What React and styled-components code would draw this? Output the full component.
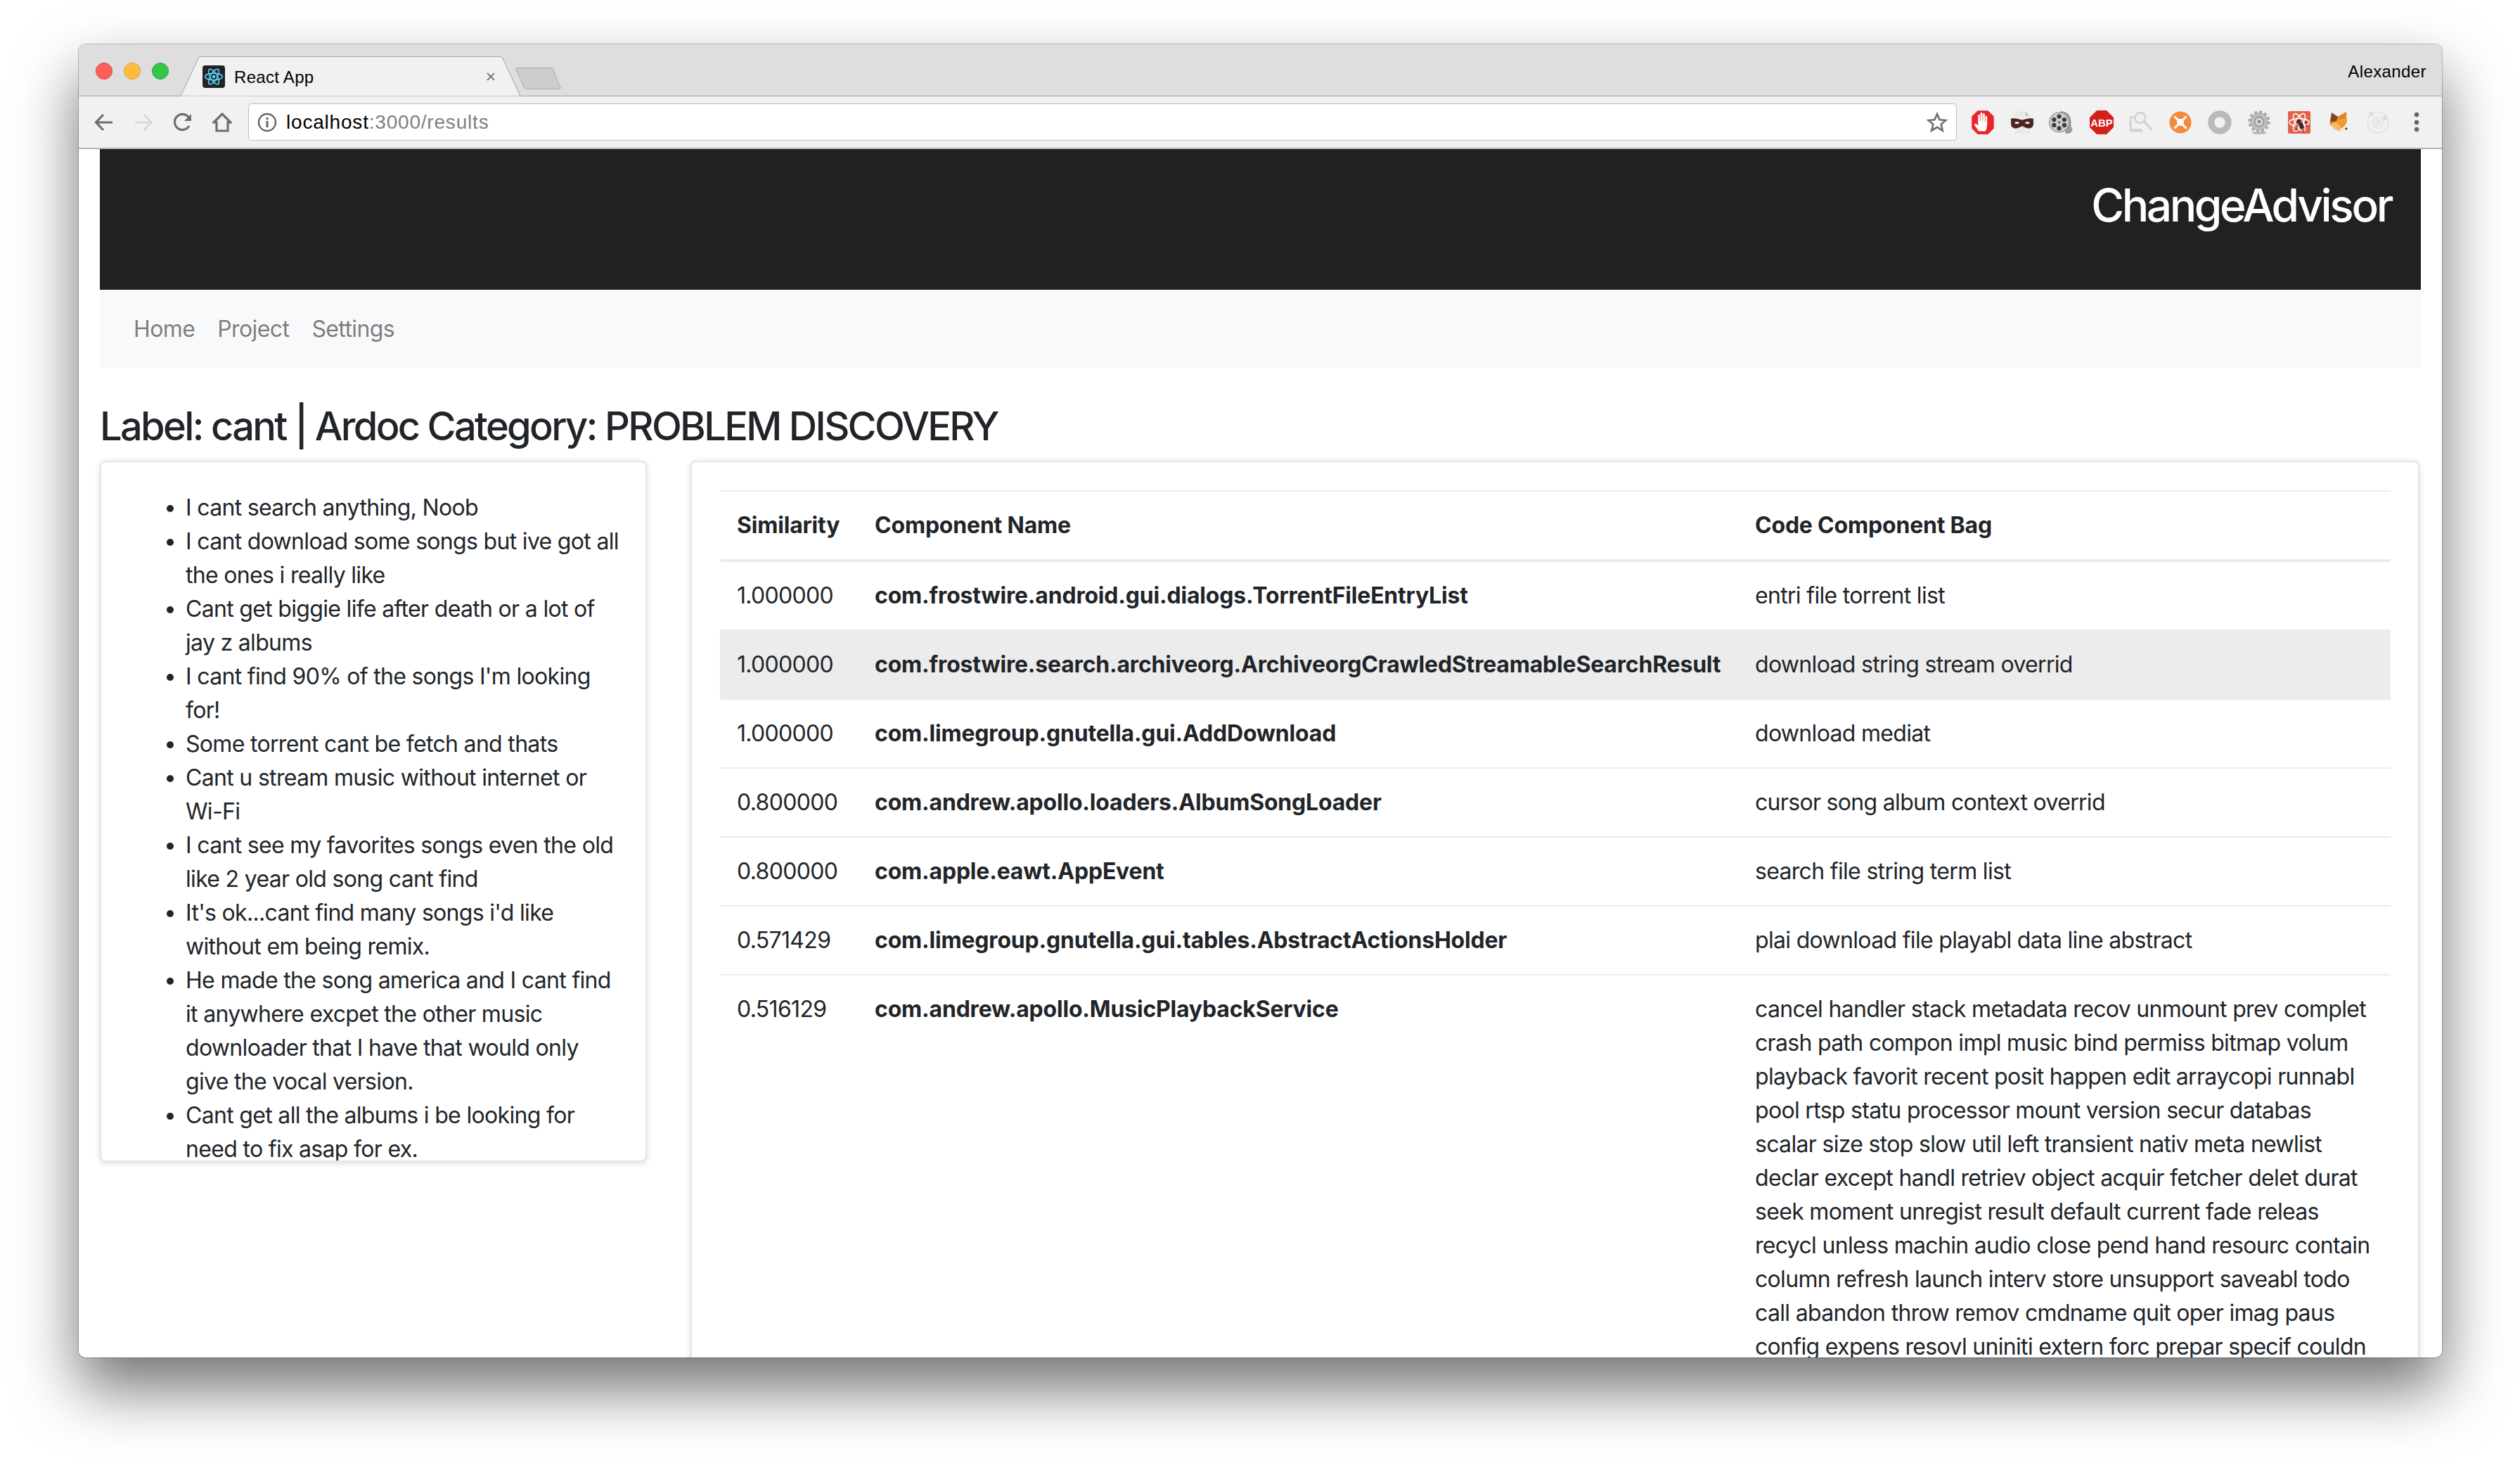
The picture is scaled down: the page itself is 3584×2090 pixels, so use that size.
import styled, { createGlobalStyle } from 'styled-components';

const GlobalStyle = createGlobalStyle`
  html, body {
    margin: 0;
    background: #ffffff;
    overflow: hidden;
  }
  * {
    box-sizing: border-box;
  }
`;

const uiFont = `Inter, 'Liberation Sans', sans-serif`;
const chromeFont = `'Liberation Sans', Arial, sans-serif`;

const reviews = [
  ['I cant search anything, Noob'],
  ['I cant download some songs but ive got all', 'the ones i really like'],
  ['Cant get biggie life after death or a lot of', 'jay z albums'],
  ["I cant find 90% of the songs I'm looking", 'for!'],
  ['Some torrent cant be fetch and thats'],
  ['Cant u stream music without internet or', 'Wi-Fi'],
  ['I cant see my favorites songs even the old', 'like 2 year old song cant find'],
  ["It's ok...cant find many songs i'd like", 'without em being remix.'],
  ['He made the song america and I cant find', 'it anywhere excpet the other music', 'downloader that I have that would only', 'give the vocal version.'],
  ['Cant get all the albums i be looking for', 'need to fix asap for ex.'],
];

const results = [
  { id: 1, score: '1.000000', name: 'com.frostwire.android.gui.dialogs.TorrentFileEntryList', bag: ['entri file torrent list'] },
  { id: 2, score: '1.000000', name: 'com.frostwire.search.archiveorg.ArchiveorgCrawledStreamableSearchResult', bag: ['download string stream overrid'], active: true },
  { id: 3, score: '1.000000', name: 'com.limegroup.gnutella.gui.AddDownload', bag: ['download mediat'] },
  { id: 4, score: '0.800000', name: 'com.andrew.apollo.loaders.AlbumSongLoader', bag: ['cursor song album context overrid'] },
  { id: 5, score: '0.800000', name: 'com.apple.eawt.AppEvent', bag: ['search file string term list'] },
  { id: 6, score: '0.571429', name: 'com.limegroup.gnutella.gui.tables.AbstractActionsHolder', bag: ['plai download file playabl data line abstract'] },
  {
    id: 7,
    score: '0.516129',
    name: 'com.andrew.apollo.MusicPlaybackService',
    bag: [
      'cancel handler stack metadata recov unmount prev complet',
      'crash path compon impl music bind permiss bitmap volum',
      'playback favorit recent posit happen edit arraycopi runnabl',
      'pool rtsp statu processor mount version secur databas',
      'scalar size stop slow util left transient nativ meta newlist',
      'declar except handl retriev object acquir fetcher delet durat',
      'seek moment unregist result default current fade releas',
      'recycl unless machin audio close pend hand resourc contain',
      'column refresh launch interv store unsupport saveabl todo',
      'call abandon throw remov cmdname quit oper imag paus',
      'config expens resovl uniniti extern forc prepar specif couldn',
    ],
  },
];

const Atom = ({ size = 32, color = '#61dafb', strokeWidth = 1.6 }) => (
  <svg width={size} height={size} viewBox="0 0 32 32" fill="none" stroke={color} strokeWidth={strokeWidth}>
    <ellipse cx="16" cy="16" rx="13" ry="5.2" />
    <ellipse cx="16" cy="16" rx="13" ry="5.2" transform="rotate(60 16 16)" />
    <ellipse cx="16" cy="16" rx="13" ry="5.2" transform="rotate(120 16 16)" />
    <circle cx="16" cy="16" r="2.4" fill={color} stroke="none" />
  </svg>
);

const StopHand = () => (
  <svg width="36" height="36" viewBox="0 0 32 32">
    <path d="M9.5 1h13L30 8.500v15L22.500 31h-13L2 23.500v-15z" fill="#e8262b" />
    <path d="M10.500 27c-1-3-4.500-6-5-8-.3-1.300 1.300-2 2.300-1l2.200 2.200V7.500c0-1.700 2.300-1.700 2.400 0V14h.6V5c0-1.800 2.500-1.800 2.600 0v9h.6V6c0-1.700 2.400-1.700 2.400 0v9h.6V9c0-1.600 2.300-1.600 2.300 0v9c0 4-1 7-2 9z" fill="#ffffff" />
  </svg>
);

const MaskDoc = () => (
  <svg width="34" height="34" viewBox="0 0 32 32">
    <path d="M6 1h14l6 6v24H6z" fill="#e9ebe6" />
    <path d="M20 1v6h6z" fill="#c9cbc6" />
    <path d="M1 11c5-1 9 0 15 2 6-2 10-3 15-2v7c0 4-3 6-7 6-3 0-5-2-8-3-3 1-5 3-8 3-4 0-7-2-7-6z" fill="#4b2423" />
    <ellipse cx="9" cy="16.500" rx="3" ry="1.500" fill="#f1ece8" />
    <ellipse cx="23" cy="16.500" rx="3" ry="1.500" fill="#f1ece8" />
  </svg>
);

const FilmReel = () => (
  <svg width="36" height="36" viewBox="0 0 32 32">
    <path d="M14 2c6 0 14 2 14 14 0 3 0 7 2 9-1 4-5 6-9 5z" fill="#9c9c9c" />
    <circle cx="13" cy="16" r="12.500" fill="#cfcfcf" stroke="#8c8c8c" />
    <circle cx="13" cy="8.500" r="2.800" fill="#3d3d3d" />
    <circle cx="13" cy="23.500" r="2.800" fill="#3d3d3d" />
    <circle cx="6.500" cy="12.500" r="2.800" fill="#3d3d3d" />
    <circle cx="19.500" cy="12.500" r="2.800" fill="#3d3d3d" />
    <circle cx="6.500" cy="19.500" r="2.800" fill="#3d3d3d" />
    <circle cx="19.500" cy="19.500" r="2.800" fill="#3d3d3d" />
    <circle cx="13" cy="16" r="1.600" fill="#666666" />
  </svg>
);

const AbpBadge = () => (
  <svg width="34" height="34" viewBox="0 0 32 32">
    <path d="M9.500 0h13L32 9.500v13L22.500 32h-13L0 22.500v-13z" fill="#d4201a" />
    <text x="16" y="21.500" textAnchor="middle" fontFamily={chromeFont} fontWeight="700" fontSize="14" fill="#ffffff">ABP</text>
  </svg>
);

const GhostSearch = () => (
  <svg width="34" height="34" viewBox="0 0 32 32" fill="none" stroke="#d2d2d2" strokeWidth="2.600">
    <path d="M9 9H2v17h15" />
    <path d="M2 26h16v3H2z" fill="#d2d2d2" stroke="none" />
    <circle cx="15" cy="10" r="7" />
    <path d="M20 15l10 10" strokeWidth="3" strokeLinecap="round" />
  </svg>
);

const OrangeHub = () => (
  <svg width="32" height="32" viewBox="0 0 32 32">
    <circle cx="16" cy="16" r="15.500" fill="#f58a3b" />
    <path d="M7.500 7.500l17 17M24.500 7.500l-17 17" stroke="#ffffff" strokeWidth="3" />
    <circle cx="16" cy="16" r="5" fill="#ffffff" />
  </svg>
);

const GreyRing = () => (
  <svg width="34" height="34" viewBox="0 0 32 32">
    <circle cx="16" cy="16" r="11.500" fill="none" stroke="#b9b9b9" strokeWidth="8.500" />
  </svg>
);

const Gear = () => (
  <svg width="34" height="34" viewBox="0 0 32 32">
    <ellipse cx="16" cy="30" rx="10" ry="2" fill="#8a8a8a" opacity="0.5" />
    <circle cx="16" cy="15" r="13" fill="none" stroke="#a7a7a7" strokeWidth="3.500" strokeDasharray="3.600 3.200" />
    <circle cx="16" cy="15" r="11.500" fill="#bdbdbd" stroke="#8f8f8f" strokeWidth="0.600" />
    <circle cx="16" cy="15" r="7" fill="#9b9b9b" />
    <circle cx="16" cy="15" r="5" fill="#e3e3e3" />
    <circle cx="16" cy="15" r="2.600" fill="#8f8f8f" />
  </svg>
);

const AtomBug = () => (
  <svg width="32" height="32" viewBox="0 0 32 32">
    <rect width="32" height="32" rx="2" fill="#e4604e" />
    <g fill="none" stroke="#ffffff" strokeWidth="1.500">
      <ellipse cx="16" cy="16" rx="14" ry="5.600" />
      <ellipse cx="16" cy="16" rx="14" ry="5.600" transform="rotate(60 16 16)" />
      <ellipse cx="16" cy="16" rx="14" ry="5.600" transform="rotate(120 16 16)" />
    </g>
    <rect x="13" y="12" width="5" height="5" fill="#2a2a2a" />
    <path d="M15 18l5-2 3 7-5 3z" fill="#2a2a2a" />
    <path d="M14 22l-3-1M14 25l-3 2M24 17l3-2M25 21l3 0M21 27l1 3" stroke="#2a2a2a" strokeWidth="1.500" />
  </svg>
);

const FoxHead = () => (
  <svg width="32" height="34" viewBox="0 0 32 34">
    <path d="M3 20L6 4l9 5 12-7 1 14-3 6-8 6z" fill="#f39a2c" />
    <path d="M4 17L6 3l9 6-2 6z" fill="#7b4a22" />
    <path d="M15 9l12-7-2 9-7 2z" fill="#e8821e" />
    <path d="M3 20l8 7 6 3 9-2 2-2-8-1-7-8z" fill="#f7ba6d" />
    <path d="M17 30l9-2 2-2-8-1z" fill="#f1ece2" />
    <circle cx="27" cy="26" r="1.400" fill="#222222" />
  </svg>
);

const FadedOrbit = () => (
  <svg width="34" height="34" viewBox="0 0 32 32" fill="none" stroke="#e4e4e4" strokeWidth="1.800">
    <circle cx="16" cy="16" r="14" />
    <circle cx="16" cy="16" r="7.500" />
    <circle cx="16" cy="16" r="4.500" fill="#e4e4e4" stroke="none" />
    <circle cx="7" cy="4.500" r="3" fill="#dcdcdc" stroke="none" />
    <circle cx="25" cy="10" r="3" fill="#dcdcdc" stroke="none" />
  </svg>
);

const Dots = () => (
  <svg width="8" height="32" viewBox="0 0 8 32" fill="#666666">
    <circle cx="4" cy="5" r="3.200" />
    <circle cx="4" cy="16" r="3.200" />
    <circle cx="4" cy="26" r="3.200" />
  </svg>
);

const extensions = [StopHand, MaskDoc, FilmReel, AbpBadge, GhostSearch, OrangeHub, GreyRing, Gear, AtomBug, FoxHead, FadedOrbit];

const App = () => (
  <>
    <GlobalStyle />
    <Stage>
      <BrowserWindow>
        <TabStrip>
          <TrafficLights>
            <Light $fill="#fc5f57" $edge="#e0443e" />
            <Light $fill="#fdbc40" $edge="#dea034" />
            <Light $fill="#33c748" $edge="#27aa35" />
          </TrafficLights>
          <Tab>
            <TabShape width="483" height="57" viewBox="0 0 483 57">
              <path d="M0 56.500L25 3Q26 0.500 29 0.500H454Q457 0.500 458 3L483 56.500" fill="#f1f1f1" stroke="#a3a3a3" />
            </TabShape>
            <Favicon>
              <Atom size={30} />
            </Favicon>
            <TabTitle>React App</TabTitle>
            <TabClose viewBox="0 0 12 12" width="12" height="12">
              <path d="M1 1l10 10M11 1L1 11" stroke="#5f5f5f" strokeWidth="1.700" />
            </TabClose>
          </Tab>
          <NewTab width="66" height="33" viewBox="0 0 66 33">
            <path d="M3 1.500h47q3 0 4 3l10 25q1 2-2 2H16q-3 0-4-3L1 4q-1-2.500 2-2.500z" fill="#cccccc" stroke="#ababab" />
          </NewTab>
          <ProfileName>Alexander</ProfileName>
        </TabStrip>

        <Toolbar>
          <NavIcons>
            <NavIcon width="28" height="26" viewBox="0 0 28 26" stroke="#6e6e6e">
              <path d="M26 13H3M13 2L2.500 13 13 24" />
            </NavIcon>
            <NavIcon width="28" height="26" viewBox="0 0 28 26" stroke="#d9d9d9">
              <path d="M2 13h23M15 2l10.500 11L15 24" />
            </NavIcon>
            <NavIcon width="28" height="28" viewBox="0 0 28 28" stroke="#6e6e6e">
              <path d="M23 19a11 11 0 1 1 0-11" />
              <path d="M26 2v10H16z" fill="#6e6e6e" stroke="none" />
            </NavIcon>
            <NavIcon width="28" height="28" viewBox="0 0 28 28" stroke="#6e6e6e">
              <path d="M2 14L14 2l12 12h-4v12H6V14z" />
            </NavIcon>
          </NavIcons>
          <AddressBar>
            <InfoIcon width="28" height="28" viewBox="0 0 28 28">
              <circle cx="14" cy="14" r="12" fill="none" stroke="#646464" strokeWidth="2.400" />
              <rect x="12.500" y="12" width="3" height="9" fill="#646464" />
              <rect x="12.500" y="7" width="3" height="3" fill="#646464" />
            </InfoIcon>
            <Url>
              localhost<UrlMuted>:3000/results</UrlMuted>
            </Url>
            <Star width="30" height="30" viewBox="0 0 30 30">
              <path d="M15 3l3.500 8.300 9 .7-6.900 5.800 2.200 8.800L15 21.800l-7.800 4.800 2.200-8.800L2.500 12l9-.7z" fill="none" stroke="#6e6e6e" strokeWidth="2.600" strokeLinejoin="miter" />
            </Star>
          </AddressBar>
          <ExtensionTray>
            {extensions.map((Icon, index) => (
              <ExtensionSlot key={index}>
                <Icon />
              </ExtensionSlot>
            ))}
            <MenuSlot>
              <Dots />
            </MenuSlot>
          </ExtensionTray>
        </Toolbar>

        <Page>
          <Banner>
            <BrandTitle>ChangeAdvisor</BrandTitle>
          </Banner>
          <NavBar>
            <NavLink>Home</NavLink>
            <NavLink>Project</NavLink>
            <NavLink>Settings</NavLink>
          </NavBar>
          <PageHeading>Label: cant | Ardoc Category: PROBLEM DISCOVERY</PageHeading>
          <Columns>
            <ReviewsCard>
              <ReviewList>
                {reviews.map((lines) => (
                  <ReviewItem key={lines[0]}>
                    {lines.map((line) => (
                      <TextLine key={line}>{line}</TextLine>
                    ))}
                  </ReviewItem>
                ))}
              </ReviewList>
            </ReviewsCard>
            <ResultsCard>
              <ResultsTable>
                <colgroup>
                  <col width="196" />
                  <col width="1252" />
                  <col width="928" />
                </colgroup>
                <thead>
                  <tr>
                    <HeadCell>Similarity</HeadCell>
                    <HeadCell>Component Name</HeadCell>
                    <HeadCell>Code Component Bag</HeadCell>
                  </tr>
                </thead>
                <tbody>
                  {results.map((row) => (
                    <ResultRow key={row.id} $active={row.active}>
                      <Cell>{row.score}</Cell>
                      <NameCell>{row.name}</NameCell>
                      <Cell>
                        {row.bag.map((line) => (
                          <TextLine key={line}>{line}</TextLine>
                        ))}
                      </Cell>
                    </ResultRow>
                  ))}
                </tbody>
              </ResultsTable>
            </ResultsCard>
          </Columns>
        </Page>
      </BrowserWindow>
    </Stage>
  </>
);

export default App;

const Stage = styled.div`
  width: 3584px;
  height: 2090px;
  padding: 63px 111px 160px 112px;
  background: #ffffff;
  overflow: hidden;
`;

const BrowserWindow = styled.div`
  width: 3361px;
  height: 1867px;
  display: flex;
  flex-direction: column;
  overflow: hidden;
  background: #ffffff;
  border-radius: 10px;
  box-shadow: 0 0 0 1px rgba(0, 0, 0, 0.22), 0 44px 88px rgba(0, 0, 0, 0.56);
`;

const TabStrip = styled.div`
  height: 74px;
  flex: none;
  display: flex;
  align-items: flex-end;
  background: #dedede;
  border-bottom: 1px solid #a3a3a3;
`;

const TrafficLights = styled.div`
  width: 145px;
  height: 74px;
  flex: none;
  padding: 27px 0 0 24px;
  display: flex;
  gap: 16px;
`;

const Light = styled.span`
  width: 24px;
  height: 24px;
  border-radius: 50%;
  background: ${(props) => props.$fill};
  border: 1px solid ${(props) => props.$edge};
`;

const Tab = styled.div`
  position: relative;
  width: 483px;
  height: 57px;
  flex: none;
  margin-bottom: -1px;
  padding: 13px 0 0 31px;
  display: flex;
`;

const TabShape = styled.svg`
  position: absolute;
  left: 0;
  top: 0;
`;

const Favicon = styled.span`
  position: relative;
  width: 32px;
  height: 32px;
  border-radius: 4px;
  background: #20232a;
  display: flex;
  align-items: center;
  justify-content: center;
`;

const TabTitle = styled.span`
  position: relative;
  margin: 1px 0 0 13px;
  font: 24px/32px ${chromeFont};
  letter-spacing: 0.3px;
  color: #000000;
  flex: 1;
`;

const TabClose = styled.svg`
  position: relative;
  margin: 10px 36px 0 0;
`;

const NewTab = styled.svg`
  flex: none;
  margin: 0 0 8px -7px;
`;

const ProfileName = styled.span`
  margin: 0 22px 18px auto;
  font: 24px/32px ${chromeFont};
  letter-spacing: 0.4px;
  color: #000000;
`;

const Toolbar = styled.div`
  height: 75px;
  flex: none;
  display: flex;
  align-items: center;
  background: #f1f1f1;
  border-bottom: 2px solid #b5b5b5;
`;

const NavIcons = styled.div`
  width: 241px;
  flex: none;
  padding-left: 22px;
  display: flex;
  align-items: center;
  gap: 28px;
`;

const NavIcon = styled.svg`
  flex: none;
  fill: none;
  stroke-width: 3.200;
`;

const AddressBar = styled.div`
  width: 2430px;
  height: 53px;
  flex: none;
  display: flex;
  align-items: center;
  padding: 0 12px 0 12px;
  background: #ffffff;
  border: 1px solid #bdbdbd;
  border-radius: 5px;
`;

const InfoIcon = styled.svg`
  flex: none;
`;

const Url = styled.span`
  margin-left: 13px;
  font: 28px/32px ${chromeFont};
  letter-spacing: 0.8px;
  color: #000000;
  flex: 1;
`;

const UrlMuted = styled.span`
  color: #808080;
`;

const Star = styled.svg`
  flex: none;
`;

const ExtensionTray = styled.div`
  flex: 1;
  display: flex;
  align-items: center;
  padding-left: 9px;
`;

const ExtensionSlot = styled.span`
  width: 56.200px;
  height: 40px;
  flex: none;
  display: flex;
  align-items: center;
  justify-content: center;
`;

const MenuSlot = styled(ExtensionSlot)`
  width: 53px;
`;

const Page = styled.main`
  flex: 1;
  min-height: 0;
  padding: 0 30px;
  font-family: ${uiFont};
  color: #212529;
  background: #ffffff;
`;

const Banner = styled.header`
  height: 200px;
  padding: 41px 42px 0 0;
  background: #212121;
  display: flex;
  justify-content: flex-end;
`;

const BrandTitle = styled.h1`
  margin: 0;
  font-size: 64px;
  line-height: 77px;
  font-weight: 500;
  letter-spacing: -3.400px;
  color: #ffffff;
`;

const NavBar = styled.nav`
  height: 111px;
  padding: 0 32px;
  display: flex;
  align-items: center;
  background: #f8f9fa;
`;

const NavLink = styled.a`
  padding: 0 16px;
  font-size: 32px;
  line-height: 48px;
  letter-spacing: -0.600px;
  color: rgba(0, 0, 0, 0.5);
`;

const PageHeading = styled.h3`
  margin: 49px 0 0;
  height: 83px;
  font-size: 56px;
  line-height: 68px;
  font-weight: 500;
  letter-spacing: -2.700px;
  color: #212529;
`;

const Columns = styled.div`
  display: flex;
  align-items: flex-start;
  gap: 62px;
`;

const Card = styled.section`
  background: #ffffff;
  border-radius: 8px;
  border: 2px solid #e4e4e4;
  box-shadow: 0 2px 8px rgba(0, 0, 0, 0.14);
  flex: none;
`;

const ReviewsCard = styled(Card)`
  width: 778px;
  height: 997px;
  padding-top: 41px;
  overflow: hidden;
`;

const ResultsCard = styled(Card)`
  width: 2459px;
  padding: 40px 40px 0;
`;

const ReviewList = styled.ul`
  margin: 0;
  padding: 0 0 0 120px;
  font-size: 32px;
  line-height: 48px;
  letter-spacing: -0.680px;
  color: #212529;
`;

const ReviewItem = styled.li``;

const TextLine = styled.span`
  display: block;
  white-space: nowrap;
`;

const ResultsTable = styled.table`
  width: 2376px;
  table-layout: fixed;
  border-collapse: collapse;
  font-size: 32px;
  line-height: 48px;
  letter-spacing: -0.680px;
  color: #212529;
`;

const HeadCell = styled.th`
  padding: 24px;
  text-align: left;
  font-weight: 700;
  letter-spacing: -0.200px;
  border-top: 2px solid #e9ecef;
  border-bottom: 4px solid #e9ecef;
`;

const ResultRow = styled.tr`
  background: ${(props) => (props.$active ? '#ececec' : 'transparent')};
`;

const Cell = styled.td`
  padding: 24px;
  vertical-align: top;
  border-top: 2px solid #e9ecef;
`;

const NameCell = styled(Cell)`
  font-weight: 700;
  letter-spacing: -0.200px;
  white-space: nowrap;
`;
